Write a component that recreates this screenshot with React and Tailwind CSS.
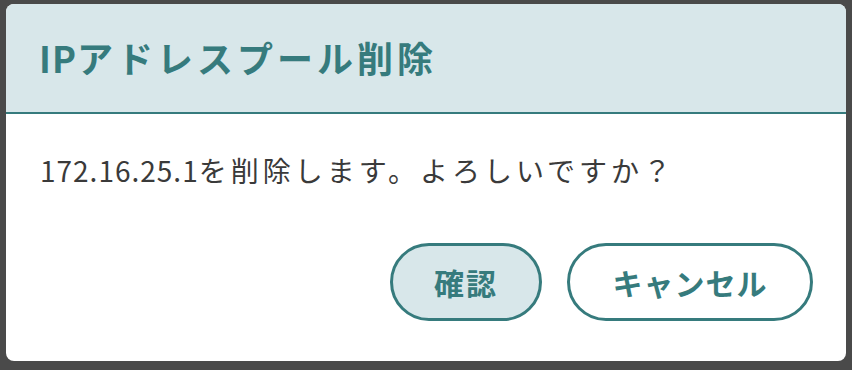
import React from 'react';

const font = { fontFamily: '"Noto Sans CJK JP", "Noto Sans", sans-serif' };

function App() {
    return (
        <div className="w-[852px] h-[370px] bg-[#4a4a4a] pt-[4px] pl-[6px] pr-[6px] pb-[9px]" style={font}>
            <div className="h-full bg-white rounded-[8px] overflow-hidden flex flex-col">
                <div className="h-[110px] shrink-0 bg-[#d8e7ea] border-b-2 border-[#367b7d] flex items-center px-[33px] pb-[3px]">
                    <h1 className="text-[36px] leading-none font-bold text-[#367b7d]">
                        <span className="tracking-[1px]">IP</span>
                        <span className="tracking-[4px]">アドレスプール削除</span>
                    </h1>
                </div>
                <div className="pt-[36px] px-[34px]">
                    <p className="text-[28px] leading-[40px] text-[#3a3a3a]">
                        <span className="tracking-[1px]">172.16.25.1</span>
                        <span className="tracking-[4px]">を削除します。よろしいですか？</span>
                    </p>
                </div>
                <div className="flex justify-end gap-[25px] pr-[33px] mt-[53px]">
                    <button className="w-[152px] h-[78px] rounded-full border-[3px] border-[#367b7d] bg-[#d8e7ea] text-[30px] font-bold text-[#367b7d] tracking-[2px]">
                        確認
                    </button>
                    <button className="w-[246px] h-[78px] rounded-full border-[3px] border-[#367b7d] bg-white text-[30px] font-bold text-[#367b7d] tracking-[1px]">
                        キャンセル
                    </button>
                </div>
            </div>
        </div>
    );
}

export default App;
